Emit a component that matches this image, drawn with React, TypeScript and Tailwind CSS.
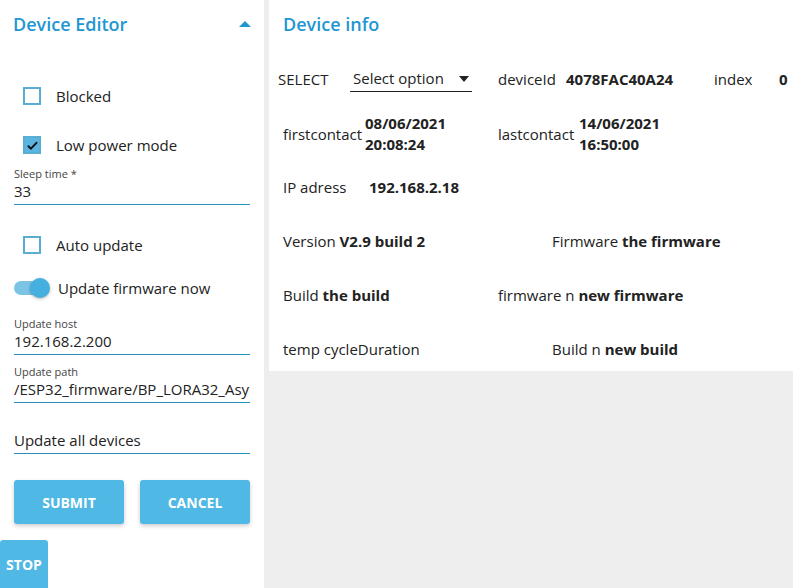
import {useState} from "react";

const font = {fontFamily: '"Open Sans", "Noto Sans", sans-serif'};

function Checkbox({checked, label}: {checked?: boolean; label: string}) {
  return (
    <div className="flex items-center h-[24px] pl-[23px]">
      <div
        className={`w-[18px] h-[18px] border-2 border-[#5aaed3] flex items-center justify-center ${
          checked ? "bg-[#5ab6e0]" : "bg-white"
        }`}
      >
        {checked && (
          <svg width="13" height="13" viewBox="0 0 24 24">
            <path d="M3.5 12.5l5.5 5.5L20.5 6" fill="none" stroke="#111" strokeWidth="3.4" />
          </svg>
        )}
      </div>
      <span className="ml-[15px] text-[15px] text-[#222]">{label}</span>
    </div>
  );
}

function Field({label, value}: {label?: string; value: string}) {
  return (
    <div className="mx-[14px] border-b border-[#2a8fb8]">
      {label && <div className="text-[11px] leading-[14px] text-[#444]">{label}</div>}
      <div className="text-[15px] leading-[20px] text-[#222] whitespace-nowrap overflow-hidden pb-[3px]">
        {value}
      </div>
    </div>
  );
}

function Info({label, value, className}: {label: string; value?: string; className?: string}) {
  return (
    <div className={`text-[15px] text-[#222] whitespace-nowrap ${className ?? ""}`}>
      {label} {value && <b className="font-bold">{value}</b>}
    </div>
  );
}

export default function App() {
  const [open] = useState(true);
  return (
    <div className="w-[793px] h-[588px] flex bg-[#eeeeee] overflow-hidden" style={font}>
      <div className="w-[264px] h-[588px] bg-white shrink-0 overflow-hidden">
        <div className="flex items-center justify-between h-[48px] pl-[13px] pr-[13px]">
          <span className="text-[18px] font-semibold text-[#2196d3]">Device Editor</span>
          {open && (
            <svg width="12" height="8" viewBox="0 0 12 8">
              <path d="M0 7L6 1l6 6z" fill="#2196d3" />
            </svg>
          )}
        </div>
        <div className="mt-[36px]">
          <Checkbox label="Blocked" />
        </div>
        <div className="mt-[25px]">
          <Checkbox checked label="Low power mode" />
        </div>
        <div className="mt-[10px]">
          <Field label="Sleep time *" value="33" />
        </div>
        <div className="mt-[28px]">
          <Checkbox label="Auto update" />
        </div>
        <div className="mt-[19px] flex items-center pl-[14px] h-[24px]">
          <div className="relative w-[34px] h-[14px] rounded-full bg-[#7cc4e6]">
            <div className="absolute right-[-2px] top-[-3px] w-[20px] h-[20px] rounded-full bg-[#45b0e0] shadow-[0_1px_3px_rgba(0,0,0,0.3)]" />
          </div>
          <span className="ml-[10px] text-[15px] text-[#222]">Update firmware now</span>
        </div>
        <div className="mt-[17px]">
          <Field label="Update host" value="192.168.2.200" />
        </div>
        <div className="mt-[10px]">
          <Field label="Update path" value="/ESP32_firmware/BP_LORA32_AsyncWebServer" />
        </div>
        <div className="mt-[27px]">
          <Field value="Update all devices" />
        </div>
        <div className="mt-[26px] flex gap-[16px] px-[14px]">
          <button className="w-[110px] h-[44px] rounded-[3px] bg-[#4fb8e4] text-white font-bold text-[14px] shadow-[0_2px_4px_rgba(0,0,0,0.2)]">
            SUBMIT
          </button>
          <button className="w-[110px] h-[44px] rounded-[3px] bg-[#4fb8e4] text-white font-bold text-[14px] shadow-[0_2px_4px_rgba(0,0,0,0.2)]">
            CANCEL
          </button>
        </div>
        <div className="mt-[16px]">
          <button className="block w-[48px] h-[52px] rounded-[3px] bg-[#4fb8e4] text-white font-bold text-[14px] pb-[4px]">
            STOP
          </button>
        </div>
      </div>
      <div className="ml-[5px] flex-1 self-start h-[371px] bg-white flex flex-col">
        <div className="h-[48px] shrink-0 flex items-center pl-[14px]">
          <span className="text-[18px] font-semibold text-[#2196d3]">Device info</span>
        </div>
        <div className="mt-[18px] flex items-center h-[26px] pl-[9px] text-[15px] text-[#222] whitespace-nowrap">
          <span className="w-[72px]">SELECT</span>
          <div className="w-[122px] h-[26px] border-b border-[#222] flex items-center justify-between pl-[3px] pr-[3px]">
            <span>Select option</span>
            <svg width="10" height="6" viewBox="0 0 10 6">
              <path d="M0 0h10L5 6z" fill="#222" />
            </svg>
          </div>
          <span className="ml-[26px] w-[68px]">deviceId</span>
          <b className="w-[148px] font-bold">4078FAC40A24</b>
          <span className="w-[65px]">index</span>
          <b className="font-bold">0</b>
        </div>
        <div className="mt-[21px] flex items-center pl-[14px] text-[15px] text-[#222]">
          <span className="w-[82px]">firstcontact</span>
          <b className="font-bold leading-[21px] w-[133px]">
            08/06/2021
            <br />
            20:08:24
          </b>
          <span className="w-[81px]">lastcontact</span>
          <b className="font-bold leading-[21px]">
            14/06/2021
            <br />
            16:50:00
          </b>
        </div>
        <div className="mt-[22px] flex items-center pl-[14px] h-[20px] text-[15px] text-[#222]">
          <span className="w-[86px]">IP adress</span>
          <b className="font-bold">192.168.2.18</b>
        </div>
        <div className="mt-[34px] flex items-center h-[20px] pl-[14px]">
          <Info className="w-[269px]" label="Version" value="V2.9 build 2" />
          <Info label="Firmware" value="the firmware" />
        </div>
        <div className="mt-[34px] flex items-center h-[20px] pl-[14px]">
          <Info className="w-[215px]" label="Build" value="the build" />
          <Info label="firmware n" value="new firmware" />
        </div>
        <div className="mt-[34px] flex items-center h-[20px] pl-[14px]">
          <Info className="w-[269px]" label="temp cycleDuration" />
          <Info label="Build n" value="new build" />
        </div>
      </div>
    </div>
  );
}
